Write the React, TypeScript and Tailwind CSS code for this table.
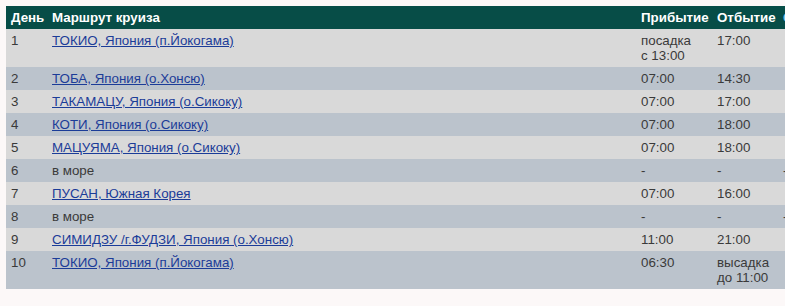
import React from "react";

type Row = { d: string; route: string; link: boolean; arr: string[]; dep: string[]; extra?: string };

const rows: Row[] = [
  { d: "1", route: "ТОКИО, Япония (п.Йокогама)", link: true, arr: ["посадка", "с 13:00"], dep: ["17:00"] },
  { d: "2", route: "ТОБА, Япония (о.Хонсю)", link: true, arr: ["07:00"], dep: ["14:30"] },
  { d: "3", route: "ТАКАМАЦУ, Япония (о.Сикоку)", link: true, arr: ["07:00"], dep: ["17:00"] },
  { d: "4", route: "КОТИ, Япония (о.Сикоку)", link: true, arr: ["07:00"], dep: ["18:00"] },
  { d: "5", route: "МАЦУЯМА, Япония (о.Сикоку)", link: true, arr: ["07:00"], dep: ["18:00"] },
  { d: "6", route: "в море", link: false, arr: ["-"], dep: ["-"], extra: "-" },
  { d: "7", route: "ПУСАН, Южная Корея", link: true, arr: ["07:00"], dep: ["16:00"] },
  { d: "8", route: "в море", link: false, arr: ["-"], dep: ["-"], extra: "-" },
  { d: "9", route: "СИМИДЗУ /г.ФУДЗИ, Япония (о.Хонсю)", link: true, arr: ["11:00"], dep: ["21:00"] },
  { d: "10", route: "ТОКИО, Япония (п.Йокогама)", link: true, arr: ["06:30"], dep: ["высадка", "до 11:00"] },
];

export default function App() {
  return (
    <div
      className="w-[785px] h-[306px] overflow-hidden bg-[#fcf8f8] pt-[6px] pl-[6px]"
      style={{ fontFamily: '"Liberation Sans", Arial, sans-serif' }}
    >
      <table className="w-[900px] table-fixed border-collapse text-[13.33px] leading-[15px]">
        <colgroup>
          <col className="w-[41px]" />
          <col className="w-[589px]" />
          <col className="w-[76px]" />
          <col className="w-[66px]" />
          <col className="w-[128px]" />
        </colgroup>
        <thead>
          <tr className="bg-[#074d47] text-white font-bold text-left">
            <th className="px-[5px] py-[4px] h-[23px] align-top">День</th>
            <th className="px-[5px] py-[4px] align-top">Маршрут круиза</th>
            <th className="px-[5px] py-[4px] align-top">Прибытие</th>
            <th className="px-[5px] py-[4px] align-top">Отбытие</th>
            <th className="px-[5px] py-[4px] align-top text-[#7cc8e8]">Стоянка</th>
          </tr>
        </thead>
        <tbody className="text-[#3a3a3a]">
          {rows.map((r, i) => (
            <tr key={i} className={i % 2 === 0 ? "bg-[#d9d9d9]" : "bg-[#bbc3cc]"}>
              <td className="px-[5px] py-[4px] align-top">{r.d}</td>
              <td className="px-[5px] py-[4px] align-top">
                {r.link ? (
                  <a href="#" className="text-[#1b3c98] underline">
                    {r.route}
                  </a>
                ) : (
                  r.route
                )}
              </td>
              <td className="px-[5px] py-[4px] align-top">
                {r.arr.map((t, j) => (
                  <div key={j}>{t}</div>
                ))}
              </td>
              <td className="px-[5px] py-[4px] align-top">
                {r.dep.map((t, j) => (
                  <div key={j}>{t}</div>
                ))}
              </td>
              <td className="px-[5px] py-[4px] align-top">{r.extra ?? ""}</td>
            </tr>
          ))}
        </tbody>
      </table>
    </div>
  );
}
